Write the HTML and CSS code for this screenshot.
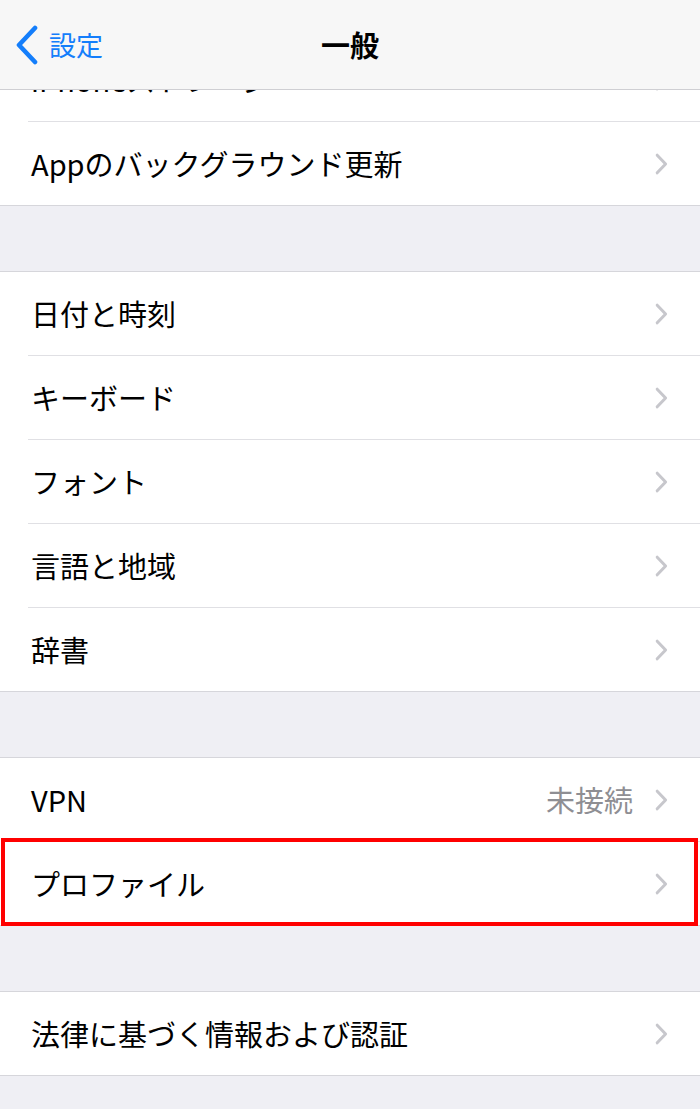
FILE: index.html
```html
<!DOCTYPE html>
<html lang="ja">

<head>
    <meta charset="UTF-8">
    <meta name="viewport" content="width=device-width, initial-scale=1.0">
    <title>一般</title>
    <link rel="stylesheet" href="styles.css">
</head>

<body>
    <!-- Navigation bar -->
    <header class="navbar">
        <a class="back" href="#">
            <svg class="back-icon" width="24" height="40" viewBox="0 0 24 40">
                <path d="M20 3 L4 20 L20 37" fill="none" stroke="#147efb" stroke-width="4.6" stroke-linecap="round" stroke-linejoin="round" />
            </svg>
            <span>設定</span>
        </a>
        <h1 class="title">一般</h1>
        <div></div>
    </header>

    <main class="settings">
        <ul class="group">
            <li class="row"><span class="label">iPhoneストレージ</span><span class="chevron"></span></li>
            <li class="row"><span class="label">Appのバックグラウンド更新</span><span class="chevron"></span></li>
        </ul>

        <ul class="group">
            <li class="row"><span class="label">日付と時刻</span><span class="chevron"></span></li>
            <li class="row"><span class="label">キーボード</span><span class="chevron"></span></li>
            <li class="row"><span class="label">フォント</span><span class="chevron"></span></li>
            <li class="row"><span class="label">言語と地域</span><span class="chevron"></span></li>
            <li class="row"><span class="label">辞書</span><span class="chevron"></span></li>
        </ul>

        <ul class="group">
            <li class="row"><span class="label">VPN</span><span class="value">未接続</span><span class="chevron"></span></li>
            <li class="row highlight"><span class="label">プロファイル</span><span class="chevron"></span></li>
        </ul>

        <ul class="group">
            <li class="row"><span class="label">法律に基づく情報および認証</span><span class="chevron"></span></li>
        </ul>
    </main>

    <script>
        // same chevron for every row
        document.querySelectorAll('.chevron').forEach(function (el) {
            el.innerHTML = '<svg width="13" height="22" viewBox="0 0 13 22">' +
                '<path d="M2.2 2.2 L10.6 11 L2.2 19.8" fill="none" stroke="#c7c7cc" stroke-width="3" stroke-linecap="round" stroke-linejoin="round"/></svg>';
        });
    </script>
</body>

</html>
```

FILE: styles.css
```css
body {
    margin: 0;
    font-family: "Noto Sans CJK JP", "Liberation Sans", sans-serif;
    background-color: #efeff4;
    color: #000;
}

.navbar {
    position: fixed;
    top: 0;
    left: 0;
    right: 0;
    z-index: 10;
    height: 89px;
    display: grid;
    grid-template-columns: 1fr auto 1fr;
    align-items: center;
    background-color: #f7f7f7;
    border-bottom: 1px solid #cfcfd3;
}

.back {
    display: flex;
    align-items: center;
    padding-left: 15px;
    color: #147efb;
    text-decoration: none;
    font-size: 27px;
    line-height: 1;
}

.back-icon {
    margin-right: 10px;
    margin-top: 1px;
}

.title {
    margin: 0;
    font-size: 29px;
    font-weight: bold;
    line-height: 1;
}

.settings {
    padding-top: 37px;
}

.group {
    list-style: none;
    margin: 0 0 65px 0;
    padding: 0;
    background-color: #fff;
    border-top: 1px solid #d6d6db;
    border-bottom: 1px solid #d6d6db;
}

.row {
    display: flex;
    align-items: center;
    box-sizing: border-box;
    height: 84px;
    margin-left: 28px;
    padding: 0 32px 0 3px;
    border-bottom: 1px solid #e0e0e4;
    font-size: 29px;
    line-height: 1;
}

.row:last-child {
    height: 83px;
    border-bottom: none;
}

.label {
    flex: 1;
    white-space: nowrap;
}

.value {
    color: #8e8e93;
    margin-right: 22px;
}

.chevron {
    display: flex;
}

.highlight {
    position: relative;
}

.highlight::after {
    content: "";
    position: absolute;
    left: -27px;
    right: 2px;
    top: -4px;
    bottom: -1px;
    border: 4px solid #ff0000;
}
```
